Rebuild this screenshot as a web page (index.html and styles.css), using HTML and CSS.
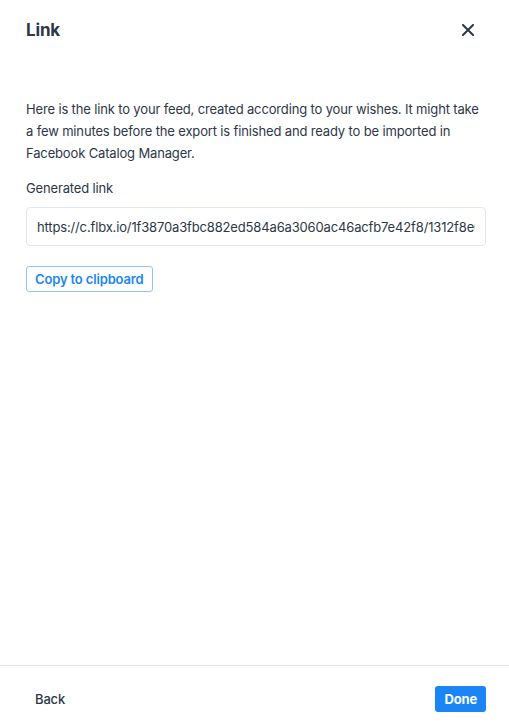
FILE: index.html
```html
<!DOCTYPE html>
<html lang="en">
  <head>
    <meta charset="UTF-8" />
    <meta name="viewport" content="width=device-width, initial-scale=1.0" />
    <title>Link</title>
    <link rel="stylesheet" href="styles.css">
  </head>
  <body>
    <div class="modal">
      <!-- Cabeçalho -->
      <div class="modal-header">
        <h1 class="modal-title">Link</h1>
        <button class="close-btn" aria-label="Close">
          <svg width="12" height="12" viewBox="0 0 12 12">
            <path d="M1 1 L11 11 M11 1 L1 11" stroke="#2d3748" stroke-width="2" stroke-linecap="round" />
          </svg>
        </button>
      </div>

      <!-- Conteúdo -->
      <div class="modal-body">
        <p class="intro">Here is the link to your feed, created according to your wishes. It might take a few minutes before the export is finished and ready to be imported in Facebook Catalog Manager.</p>
        <label class="field-label" for="feed-link">Generated link</label>
        <input id="feed-link" class="link-input" type="text" readonly value="https://c.flbx.io/1f3870a3fbc882ed584a6a3060ac46acfb7e42f8/1312f8e0a9c1d8e2.xml" />
        <button class="copy-btn">Copy to clipboard</button>
      </div>

      <!-- Rodapé -->
      <div class="modal-footer">
        <button class="back-btn">Back</button>
        <button class="done-btn">Done</button>
      </div>
    </div>
  </body>
</html>
```

FILE: styles.css
```css
/* Base */
html, body {
  margin: 0;
  height: 100%;
}

body {
  font-family: Inter, "Open Sans", sans-serif;
  color: #2d3748;
  background: #fff;
  letter-spacing: -0.15px;
}

button {
  font-family: inherit;
  letter-spacing: inherit;
  cursor: pointer;
}

/* Estrutura do modal */
.modal {
  display: flex;
  flex-direction: column;
  height: 100%;
}

.modal-header {
  display: flex;
  align-items: center;
  justify-content: space-between;
  padding: 20px 26px;
}

.modal-title {
  margin: 0;
  font-size: 17px;
  line-height: 20px;
  font-weight: 700;
  color: #2d3748;
}

.close-btn {
  border: none;
  background: none;
  padding: 0;
  margin-right: 9px;
  display: flex;
}

.modal-body {
  flex: 1;
  padding: 38px 23px 0 26px;
  display: flex;
  flex-direction: column;
  align-items: flex-start;
}

.intro {
  margin: 0 0 14px;
  font-size: 13px;
  line-height: 22px;
}

.field-label {
  font-size: 13px;
  line-height: 20px;
  margin-bottom: 9px;
}

.link-input {
  box-sizing: border-box;
  width: 100%;
  height: 39px;
  padding: 0 10px;
  border: 1px solid #e2e8f0;
  border-radius: 4px;
  font-family: inherit;
  letter-spacing: inherit;
  font-size: 13px;
  color: #2d3748;
  outline: none;
}

.copy-btn {
  margin-top: 20px;
  height: 26px;
  padding: 0 8px;
  border: 1px solid #90c4fa;
  border-radius: 3px;
  background: #fff;
  color: #1a86f5;
  font-size: 13px;
  font-weight: 600;
}

/* Rodapé */
.modal-footer {
  display: flex;
  justify-content: space-between;
  align-items: center;
  border-top: 1px solid #e2e8f0;
  padding: 20px 23px 16px 26px;
}

.back-btn {
  border: none;
  background: none;
  height: 26px;
  padding: 0 9px;
  font-size: 13px;
  font-weight: 500;
  color: #2d3748;
}

.done-btn {
  border: none;
  height: 26px;
  padding: 0 9px;
  border-radius: 3px;
  background: #1a86f5;
  color: #fff;
  font-size: 13px;
  font-weight: 700;
}
```
